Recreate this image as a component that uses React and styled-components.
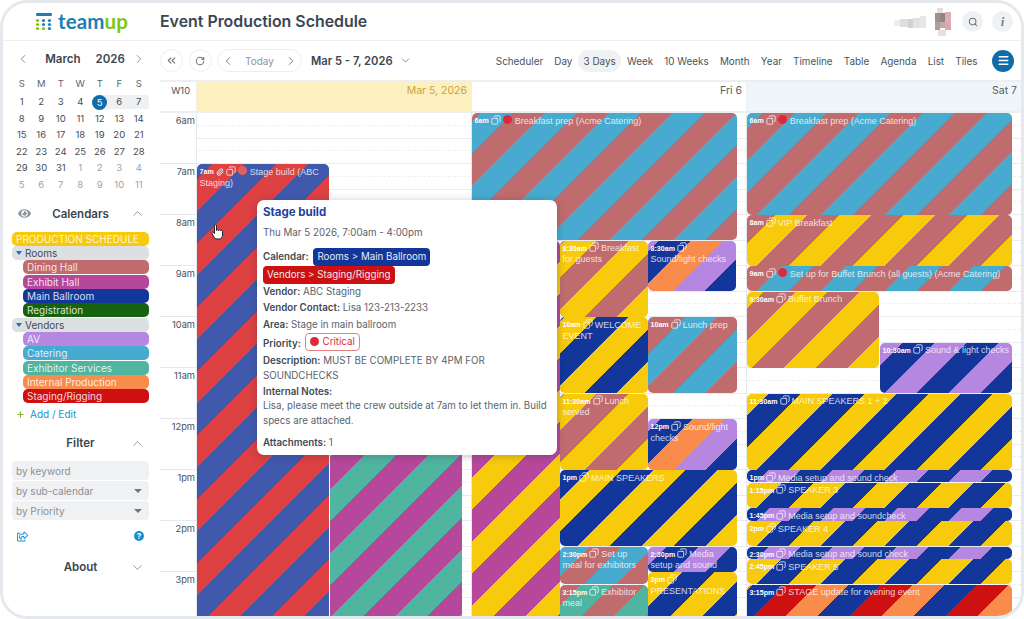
import React from 'react';
import styled, { createGlobalStyle } from 'styled-components';
import {
  ChevronLeft, ChevronRight, ChevronUp, ChevronDown, ChevronsLeft, RotateCw,
  Search, Menu, Plus, Copy, Paperclip,
} from 'lucide-react';
import { FaEye, FaRegShareSquare } from 'react-icons/fa';

const C = {
  dining: '#c06c6e', exhibit: '#b5489b', main: '#13369a', reg: '#17620f', av: '#b587e0',
  catering: '#47abd0', exhibitor: '#4fb5a0', internal: '#f98b4b', staging: '#cf1010', prod: '#f7ca0c',
};

const GlobalStyle = createGlobalStyle`
  html, body { margin: 0; padding: 0; background: #fff; }
  body { font-family: Inter, "Liberation Sans", sans-serif; color: #3c4853; }
  * { box-sizing: border-box; }
`;

const Frame = styled.div`
  width: 1024px;
  height: 619px;
  border: 3px solid #e5e8ec;
  border-radius: 27px;
  overflow: hidden;
  background: #fff;
  display: flex;
  flex-direction: column;
`;

// ---- top bar ----
const TopBar = styled.header`
  height: 38px;
  flex: none;
  display: flex;
  align-items: center;
  border-bottom: 1px solid #eceef0;
`;
const LogoBox = styled.div`
  width: 157px;
  flex: none;
  display: flex;
  align-items: center;
  padding-left: 32px;
  gap: 5px;
`;
const LogoText = styled.span`
  font-family: Lato, sans-serif;
  font-size: 20.5px;
  font-weight: 700;
  line-height: 1;
  color: #1b7fb4;
  letter-spacing: 0.1px;
  margin-top: -1px;
  b { font-weight: 700; color: #7cc70f; }
`;
const Title = styled.h1`
  flex: 1;
  margin: 0;
  font-size: 15.9px;
  font-weight: 600;
  color: #3a4651;
`;
const TopRight = styled.div`
  display: flex;
  align-items: center;
  padding-right: 8px;
`;
const RoundGrey = styled.div`
  width: 21px;
  height: 21px;
  border-radius: 50%;
  background: #f0f1f3;
  display: flex;
  align-items: center;
  justify-content: center;
  color: #6b747d;
  margin-left: ${p => p.$gap}px;
`;
const InfoMark = styled.span`
  font-family: "Liberation Serif", serif;
  font-size: 13px;
  font-weight: 700;
  font-style: italic;
  color: #7b838b;
`;

// ---- sidebar ----
const Body = styled.div`
  flex: 1;
  min-height: 0;
  display: flex;
`;
const Sidebar = styled.aside`
  width: 157px;
  flex: none;
  padding: 9px 11px 0 9px;
`;
const MonthHead = styled.div`
  height: 18px;
  display: flex;
  align-items: center;
  justify-content: space-between;
  padding: 0 3px 0 4px;
  color: #7d858d;
  font-size: 11.5px;
  font-weight: 600;
  span { color: #3a4651; }
`;
const MonthName = styled.div`
  display: flex;
  gap: 15px;
  padding-left: 8px;
`;
const DayGrid = styled.div`
  display: grid;
  grid-template-columns: repeat(7, 19.5px);
  margin: 8px 0 0 0;
`;
const WeekLetter = styled.div`
  height: 16px;
  margin-bottom: 2px;
  font-size: 9.5px;
  line-height: 16px;
  text-align: center;
  color: #5e666e;
`;
const DayCell = styled.div`
  height: 16.6px;
  font-size: 9.5px;
  line-height: 16px;
  text-align: center;
  color: ${p => (p.$off ? '#9aa1a8' : '#434c55')};
  background: ${p => (p.$range ? 'linear-gradient(#0000 0.5px, #eef0f2 0.5px, #eef0f2 15.5px, #0000 15.5px)' : 'none')};
  border-radius: ${p => (p.$end ? '0 5px 5px 0' : '0')};
`;
const TodayCell = styled(DayCell)`
  position: relative;
  background: linear-gradient(90deg, #0000 50%, #eef0f2 50%);
  background-size: 100% 15px;
  background-repeat: no-repeat;
  background-position: 0 0.5px;
  span {
    display: block;
    width: 15px;
    height: 15px;
    margin: 0 auto;
    border-radius: 50%;
    background: #0f6cab;
    color: #fff;
    line-height: 15px;
    position: relative;
    top: 0.5px;
  }
`;
const SectionHead = styled.div`
  height: 20px;
  margin-top: ${p => p.$mt}px;
  display: grid;
  grid-template-columns: 24px 1fr 24px;
  align-items: center;
  text-align: center;
  font-size: 11.5px;
  font-weight: 600;
  color: #3a4651;
  svg { color: #8b939a; justify-self: center; }
`;
const CalList = styled.div`
  margin-top: 8px;
  display: flex;
  flex-direction: column;
  gap: 0.33px;
`;
const CalRow = styled.div`
  height: 14px;
  margin-left: ${p => (p.$sub ? 11 : 0)}px;
  border-radius: 5px;
  padding: 0 4px;
  background: ${p => p.$bg};
  color: ${p => (p.$group ? '#3f4a54' : 'rgba(255, 255, 255, 0.85)')};
  font-size: 10px;
  line-height: 14px;
  white-space: nowrap;
  display: flex;
  align-items: center;
  gap: 3px;
`;
const GroupCaret = styled.i`
  width: 0;
  height: 0;
  border: 3.5px solid transparent;
  border-top: 4px solid #1a70b8;
  border-bottom: 0;
`;
const AddEdit = styled.div`
  height: 14px;
  margin-top: 4px;
  padding-left: 4px;
  display: flex;
  align-items: center;
  gap: 5px;
  font-size: 10px;
  color: #1a8fd0;
  svg { color: #86b62a; }
`;
const FilterBox = styled.div`
  margin-top: 8px;
  display: flex;
  flex-direction: column;
  gap: 1px;
`;
const FilterField = styled.div`
  height: 19px;
  border-radius: 4px;
  background: #f0f1f3;
  padding: 0 4px;
  display: flex;
  align-items: center;
  justify-content: space-between;
  color: #8a9097;
  font-size: 10px;
  i {
    width: 0;
    height: 0;
    margin-right: 3px;
    border: 4px solid transparent;
    border-top: 4px solid #6f767d;
    border-bottom: 0;
  }
`;
const LinkRow = styled.div`
  height: 12px;
  margin-top: 10px;
  padding: 0 5px;
  display: flex;
  justify-content: space-between;
  align-items: center;
  color: #1a8fd0;
`;
const HelpDot = styled.span`
  width: 10px;
  height: 10px;
  border-radius: 50%;
  background: #1a8fd0;
  color: #fff;
  font-size: 8px;
  font-weight: 700;
  line-height: 10px;
  text-align: center;
`;

// ---- main ----
const Main = styled.main`
  flex: 1;
  min-width: 0;
  display: flex;
  flex-direction: column;
`;
const Toolbar = styled.div`
  height: 39px;
  flex: none;
  display: flex;
  align-items: center;
  padding-right: 7px;
`;
const GhostRound = styled.button`
  width: 23px;
  height: 23px;
  padding: 0;
  margin-right: 5.5px;
  border: 1px solid #eceef1;
  border-radius: 50%;
  background: #fff;
  color: #6e767e;
  display: flex;
  align-items: center;
  justify-content: center;
`;
const TodayGroup = styled.div`
  width: 85px;
  height: 23px;
  display: flex;
  align-items: center;
  justify-content: space-between;
  padding: 0 3px;
  border: 1px solid #eceef1;
  border-radius: 12px;
  color: #6e767e;
  font-size: 10px;
  span { color: #8f969d; }
`;
const RangeLabel = styled.div`
  margin-left: 9px;
  display: flex;
  align-items: center;
  gap: 6px;
  font-size: 11.2px;
  font-weight: 600;
  color: #3a4651;
  white-space: nowrap;
  svg { color: #6e767e; }
`;
const Tabs = styled.nav`
  margin-left: auto;
  display: flex;
  align-items: center;
`;
const Tab = styled.div`
  height: 22px;
  padding: 0 5.6px;
  border-radius: 11px;
  font-size: 9.9px;
  line-height: 22px;
  color: #49535c;
  white-space: nowrap;
  background: ${p => (p.$active ? '#f0f1f3' : 'none')};
`;
const MenuBtn = styled.div`
  width: 22px;
  height: 22px;
  margin-left: 9px;
  border-radius: 50%;
  background: #0f6cab;
  color: #fff;
  display: flex;
  align-items: center;
  justify-content: center;
`;

const HeadRow = styled.div`
  height: 33px;
  flex: none;
  display: grid;
  grid-template-columns: 36px repeat(3, 1fr);
  border-top: 2px solid #eceef0;
  border-bottom: 2px solid #eceef0;
`;
const WeekNo = styled.div`
  font-size: 9.3px;
  line-height: 18px;
  padding-right: 6px;
  text-align: right;
  color: #49535c;
`;
const DayHead = styled.div`
  background: ${p => p.$bg};
  color: ${p => p.$fg};
  font-size: 10.5px;
  line-height: 17px;
  padding-right: 4px;
  text-align: right;
  border-left: 1px solid #eceef0;
`;
const Grid = styled.div`
  flex: 1;
  min-height: 0;
  display: grid;
  grid-template-columns: 36px repeat(3, 1fr);
  overflow: hidden;
  position: relative;
`;
const Hours = styled.div`
  display: flex;
  flex-direction: column;
`;
const HourLabel = styled.div`
  height: 51px;
  flex: none;
  padding-right: 1px;
  border-bottom: 1px solid #e6e8eb;
  font-size: 9.3px;
  line-height: 15px;
  text-align: right;
  color: #49535c;
`;
const DayCol = styled.div`
  position: relative;
  border-left: 1px solid #e6e8eb;
  display: flex;
  flex-direction: column;
`;
const Slot = styled.div`
  height: 12.75px;
  flex: none;
  border-bottom: 1px ${p => (p.$dashed ? 'dashed #eef0f2' : 'solid #e8eaed')};
`;
const Event = styled.div`
  position: absolute;
  border-radius: 5px;
  overflow: hidden;
  padding: 1.5px 2.2px 0 2.5px;
  font-family: "Liberation Sans", Arial, sans-serif;
  font-size: 9px;
  line-height: 10.5px;
  color: rgba(255, 255, 255, 0.8);
`;
const EvTime = styled.b`
  font-size: 7.1px;
  font-weight: 700;
  margin-right: 2px;
  color: #fff;
`;
const EvIcon = styled.span`
  display: inline-block;
  vertical-align: -1.5px;
  margin-right: 2px;
  color: #fff;
  line-height: 0;
  svg { transform: ${p => (p.$flip ? 'scaleX(-1)' : 'none')}; }
`;
const EvDot = styled.span`
  display: inline-block;
  width: 9px;
  height: 9px;
  border-radius: 50%;
  vertical-align: -1px;
  margin-right: 3px;
  background: ${p => p.$c};
`;

// ---- popup ----
const Popup = styled.div`
  position: absolute;
  left: 97px;
  top: 87px;
  width: 300px;
  height: 255px;
  padding: 4px 6px;
  background: #fff;
  border-radius: 7px;
  box-shadow: 0 1px 8px rgba(30, 40, 60, 0.28);
  font-size: 9.75px;
  line-height: 16.3px;
  color: #59626b;
  b { font-weight: 600; color: #3f4a54; }
`;
const PopTitle = styled.div`
  font-size: 11.5px;
  font-weight: 700;
  color: #1d3f9e;
  line-height: 16px;
`;
const PopDate = styled.div`
  margin: 5px 0 7px;
  line-height: 16px;
`;
const PopLine = styled.div`
  margin-top: ${p => p.$mt || 0}px;
  line-height: ${p => p.$lh || 16.3}px;
`;
const CalTag = styled.span`
  display: inline-block;
  height: 18px;
  padding: 0 4px;
  margin-left: ${p => p.$ml || 0}px;
  border-radius: 4px;
  background: ${p => p.$bg};
  color: #e8ecf5;
  line-height: 18px;
`;
const PrioTag = styled.span`
  display: inline-flex;
  align-items: center;
  gap: 4px;
  height: 18px;
  padding: 0 4px;
  margin-left: 1px;
  border: 1px solid #e57f85;
  border-radius: 4px;
  color: #dc2a3c;
  i { width: 9px; height: 9px; border-radius: 50%; background: #dc2a3c; }
`;
const Cursor = styled.svg`
  position: absolute;
  left: 51px;
  top: 111px;
`;

// ---- data ----
const weeks = [
  [1, 2, 3, 4, 5, 6, 7],
  [8, 9, 10, 11, 12, 13, 14],
  [15, 16, 17, 18, 19, 20, 21],
  [22, 23, 24, 25, 26, 27, 28],
  [29, 30, 31, 1, 2, 3, 4],
  [5, 6, 7, 8, 9, 10, 11],
];

const calendars = [
  { name: 'PRODUCTION SCHEDULE', bg: C.prod },
  { name: 'Rooms', group: true },
  { name: 'Dining Hall', bg: C.dining, sub: true },
  { name: 'Exhibit Hall', bg: C.exhibit, sub: true },
  { name: 'Main Ballroom', bg: C.main, sub: true },
  { name: 'Registration', bg: C.reg, sub: true },
  { name: 'Vendors', group: true },
  { name: 'AV', bg: C.av, sub: true },
  { name: 'Catering', bg: C.catering, sub: true },
  { name: 'Exhibitor Services', bg: C.exhibitor, sub: true },
  { name: 'Internal Production', bg: C.internal, sub: true },
  { name: 'Staging/Rigging', bg: C.staging, sub: true },
];

const tabs = ['Scheduler', 'Day', '3 Days', 'Week', '10 Weeks', 'Month', 'Year', 'Timeline', 'Table', 'Agenda', 'List', 'Tiles'];
const hours = ['6am', '7am', '8am', '9am', '10am', '11am', '12pm', '1pm', '2pm', '3pm'];

// these run on past the bottom of the picture
const END = 16.45;
const SOUND = [C.main, C.av, C.internal];
const thu = [
  { start: 8, end: END, x: 133, w: 132, colors: [C.exhibitor, C.exhibit] },
  { start: 7, end: 16, x: 0, w: 132, colors: ['#4159ad', '#dd4142'], time: '7am', clip: true, dot: '#e0605f', title: 'Stage build (ABC Staging)' },
];
const fri = [
  { start: 8.5, end: END, x: 0, w: 88, colors: [C.exhibit, C.prod] },
  { start: 6, end: 8.5, x: 0, w: 265, colors: [C.dining, C.catering], time: '6am', dot: '#dc2a3c', title: 'Breakfast prep (Acme Catering)' },
  { start: 8.5, end: 10, x: 88, w: 88, colors: [C.prod, C.dining], time: '8:30am', title: 'Breakfast for guests' },
  { start: 8.5, end: 9.5, x: 176, w: 88, colors: SOUND, time: '8:30am', title: 'Sound/light checks' },
  { start: 10, end: 11.5, x: 88, w: 88, colors: [C.prod, C.main], time: '10am', title: 'WELCOME EVENT' },
  { start: 10, end: 11.5, x: 176, w: 89, colors: [C.dining, C.catering], time: '10am', title: 'Lunch prep' },
  { start: 11.5, end: 13, x: 88, w: 88, colors: [C.prod, C.dining], time: '11:30am', title: 'Lunch served' },
  { start: 12, end: 13, x: 176, w: 89, colors: SOUND, time: '12pm', title: 'Sound/light checks' },
  { start: 13, end: 14.5, x: 88, w: 177, colors: [C.prod, C.main], time: '1pm', title: 'MAIN SPEAKERS' },
  { start: 14.5, end: 15.25, x: 88, w: 88, colors: [C.dining, C.catering], time: '2:30pm', title: 'Set up meal for exhibitors' },
  { start: 14.5, end: 15, x: 176, w: 89, colors: [C.main, C.av], time: '2:30pm', title: 'Media setup and sound' },
  { start: 15.25, end: END, x: 88, w: 88, colors: [C.dining, C.exhibitor], time: '3:15pm', title: 'Exhibitor meal' },
  { start: 15, end: END, x: 176, w: 89, colors: [C.prod, C.main], time: '3pm', title: 'PRESENTATIONS' },
];
const sat = [
  { start: 6, end: 8, x: 0, w: 265, colors: [C.dining, C.catering], time: '6am', dot: '#dc2a3c', title: 'Breakfast prep (Acme Catering)' },
  { start: 8, end: 9, x: 0, w: 265, colors: [C.prod, C.dining], time: '8am', title: 'VIP Breakfast' },
  { start: 9, end: 9.5, x: 0, w: 265, colors: [C.dining, C.catering], time: '9am', dot: '#dc2a3c', title: 'Set up for Buffet Brunch (all guests) (Acme Catering)' },
  { start: 9.5, end: 11, x: 0, w: 132, colors: [C.prod, C.dining], time: '9:30am', title: 'Buffet Brunch' },
  { start: 10.5, end: 11.5, x: 133, w: 132, colors: [C.main, C.av], time: '10:30am', title: 'Sound & light checks' },
  { start: 11.5, end: 13, x: 0, w: 265, colors: [C.prod, C.main], time: '11:30am', title: 'MAIN SPEAKERS 1 + 2' },
  { start: 13, end: 13.25, x: 0, w: 265, colors: [C.main, C.av], time: '1pm', title: 'Media setup and sound check' },
  { start: 13.25, end: 13.75, x: 0, w: 265, colors: [C.prod, C.main], time: '1:15pm', title: 'SPEAKER 3' },
  { start: 13.75, end: 14, x: 0, w: 265, colors: [C.main, C.av], time: '1:45pm', title: 'Media setup and soundcheck' },
  { start: 14, end: 14.5, x: 0, w: 265, colors: [C.prod, C.main], time: '2pm', title: 'SPEAKER 4' },
  { start: 14.5, end: 14.75, x: 0, w: 265, colors: [C.main, C.av], time: '2:30pm', title: 'Media setup and sound check' },
  { start: 14.75, end: 15.25, x: 0, w: 265, colors: [C.prod, C.main], time: '2:45pm', title: 'SPEAKER 5' },
  { start: 15.25, end: END, x: 0, w: 265, colors: [C.main, C.internal, C.staging], time: '3:15pm', title: 'STAGE update for evening event' },
];

const HOUR = 51;
const BAND = 22.6;

// stripes run from the bottom right corner of the event
function stripes(colors) {
  const stops = colors.map((c, i) => `${c} ${i * BAND}px ${(i + 1) * BAND}px`);
  return `repeating-linear-gradient(-45deg, ${stops.join(', ')})`;
}

function TeamupLogo() {
  return (
    <svg width="18" height="18" viewBox="0 0 18 18">
      <rect x="1" y="0" width="16" height="3" rx="1.2" fill="#1b7fb4" />
      {[7.5, 11.5, 15.5].map((y, r) =>
        [2.5, 8.5, 14.5].map((x, i) => (
          <circle
            key={`${r}-${i}`}
            cx={x}
            cy={y}
            r="1.6"
            fill={i === 0 || (r === 2 && i === 1) ? '#7cc70f' : '#1b7fb4'}
          />
        ))
      )}
    </svg>
  );
}

// blurred-out account name and picture from the screenshot
function Smudges() {
  const grey = [[0, 4, 6, 6, '#eceef0'], [6, 3, 8, 8, '#dcdfe1'], [14, 3, 5, 9, '#cfd2d4'], [19, 2, 7, 10, '#e0e2e3'], [26, 0, 6, 12, '#e6e7e8']];
  const face = [[2, 0, 6, 6, '#e9dcdc'], [0, 5, 5, 9, '#a08d8f'], [5, 5, 5, 9, '#8c8789'], [10, 4, 6, 11, '#dcaeb0'], [0, 14, 5, 8, '#a8a493'], [5, 14, 5, 6, '#c7a6a8'], [10, 15, 6, 7, '#d9aaac'], [3, 22, 8, 6, '#ecdcdc']];
  return (
    <svg width="66" height="32" viewBox="0 0 66 32">
      {grey.map(([x, y, w, h, f], i) => <rect key={i} x={x} y={y + 10} width={w} height={h} fill={f} />)}
      {face.map(([x, y, w, h, f], i) => <rect key={i} x={x + 41} y={y + 2} width={w} height={h} fill={f} />)}
    </svg>
  );
}

function EventCard({ ev }) {
  const style = {
    top: (ev.start - 6) * HOUR,
    height: (ev.end - ev.start) * HOUR - 0.5,
    left: ev.x,
    width: ev.w,
    background: stripes(ev.colors),
  };
  return (
    <Event style={style}>
      {ev.time && <EvTime>{ev.time}</EvTime>}
      {ev.clip && <EvIcon><Paperclip size={8} strokeWidth={2.5} /></EvIcon>}
      {ev.time && <EvIcon $flip><Copy size={10} strokeWidth={1.8} /></EvIcon>}
      {ev.dot && <EvDot $c={ev.dot} />}
      {ev.title}
    </Event>
  );
}

function Day({ events }) {
  const slots = [];
  for (let i = 0; i < 40; i++) slots.push(<Slot key={i} $dashed={i % 2 === 0} />);
  return (
    <DayCol>
      {slots}
      {events.map((ev, i) => <EventCard key={i} ev={ev} />)}
    </DayCol>
  );
}

function App() {
  return (
    <Frame>
      <GlobalStyle />
      <TopBar>
        <LogoBox>
          <TeamupLogo />
          <LogoText>team<b>up</b></LogoText>
        </LogoBox>
        <Title>Event Production Schedule</Title>
        <TopRight>
          <Smudges />
          <RoundGrey $gap={2}><Search size={10} strokeWidth={2.5} /></RoundGrey>
          <RoundGrey $gap={9}><InfoMark>i</InfoMark></RoundGrey>
        </TopRight>
      </TopBar>

      <Body>
        <Sidebar>
          <MonthHead>
            <ChevronLeft size={14} strokeWidth={1.5} />
            <MonthName><span>March</span><span>2026</span></MonthName>
            <ChevronRight size={14} strokeWidth={1.5} />
          </MonthHead>
          <DayGrid>
            {['S', 'M', 'T', 'W', 'T', 'F', 'S'].map((d, i) => <WeekLetter key={i}>{d}</WeekLetter>)}
            {weeks.map((w, r) =>
              w.map((d, i) => {
                if (r === 0 && i === 4) return <TodayCell key={d}><span>{d}</span></TodayCell>;
                return (
                  <DayCell key={`${r}-${i}`} $off={r >= 5 || (r === 4 && i > 2)} $range={r === 0 && i > 4} $end={r === 0 && i === 6}>
                    {d}
                  </DayCell>
                );
              })
            )}
          </DayGrid>

          <SectionHead $mt={10}><FaEye size={13} /><span>Calendars</span><ChevronUp size={15} strokeWidth={1.5} /></SectionHead>
          <CalList>
            {calendars.map(c => (
              <CalRow key={c.name} $bg={c.group ? '#dde0e3' : c.bg} $sub={c.sub} $group={c.group}>
                {c.group && <GroupCaret />}
                {c.name}
              </CalRow>
            ))}
          </CalList>
          <AddEdit><Plus size={9} strokeWidth={3} />Add / Edit</AddEdit>

          <SectionHead $mt={12}><i /><span>Filter</span><ChevronUp size={15} strokeWidth={1.5} /></SectionHead>
          <FilterBox>
            <FilterField>by keyword</FilterField>
            <FilterField>by sub-calendar<i /></FilterField>
            <FilterField>by Priority<i /></FilterField>
          </FilterBox>
          <LinkRow><FaRegShareSquare size={11} /><HelpDot>?</HelpDot></LinkRow>
          <SectionHead $mt={15}><i /><span>About</span><ChevronDown size={15} strokeWidth={1.5} /></SectionHead>
        </Sidebar>

        <Main>
          <Toolbar>
            <GhostRound><ChevronsLeft size={13} /></GhostRound>
            <GhostRound><RotateCw size={10} strokeWidth={2.5} /></GhostRound>
            <TodayGroup>
              <ChevronLeft size={14} strokeWidth={1.5} />
              <span>Today</span>
              <ChevronRight size={14} strokeWidth={1.5} />
            </TodayGroup>
            <RangeLabel>Mar 5 - 7, 2026<ChevronDown size={13} strokeWidth={1.5} /></RangeLabel>
            <Tabs>
              {tabs.map(t => <Tab key={t} $active={t === '3 Days'}>{t}</Tab>)}
              <MenuBtn><Menu size={13} strokeWidth={2.5} /></MenuBtn>
            </Tabs>
          </Toolbar>
          <HeadRow>
            <WeekNo>W10</WeekNo>
            <DayHead $bg="#fdf0bf" $fg="#c9a33a">Mar 5, 2026</DayHead>
            <DayHead $bg="#fff" $fg="#555e67">Fri 6</DayHead>
            <DayHead $bg="#eef6fa" $fg="#555e67">Sat 7</DayHead>
          </HeadRow>
          <Grid>
            <Hours>
              {hours.map(h => <HourLabel key={h}>{h}</HourLabel>)}
            </Hours>
            <Day events={thu} />
            <Day events={fri} />
            <Day events={sat} />
            <Popup>
              <PopTitle>Stage build</PopTitle>
              <PopDate>Thu Mar 5 2026, 7:00am - 4:00pm</PopDate>
              <PopLine><b>Calendar:</b> <CalTag $bg={C.main} $ml={2}>Rooms &gt; Main Ballroom</CalTag></PopLine>
              <PopLine><CalTag $bg={C.staging}>Vendors &gt; Staging/Rigging</CalTag></PopLine>
              <PopLine><b>Vendor:</b> ABC Staging</PopLine>
              <PopLine><b>Vendor Contact:</b> Lisa 123-213-2233</PopLine>
              <PopLine><b>Area:</b> Stage in main ballroom</PopLine>
              <PopLine><b>Priority:</b> <PrioTag><i />Critical</PrioTag></PopLine>
              <PopLine $mt={1} $lh={15.5}><b>Description:</b> MUST BE COMPLETE BY 4PM FOR SOUNDCHECKS</PopLine>
              <PopLine $lh={15.5}><b>Internal Notes:</b></PopLine>
              <PopLine $lh={14.5}>Lisa, please meet the crew outside at 7am to let them in. Build specs are attached.</PopLine>
              <PopLine $mt={7}><b>Attachments:</b> 1</PopLine>
            </Popup>
            <Cursor width="13" height="16" viewBox="0 0 13 16">
              <path d="M3.5 1.5c0-1 2-1 2 0v5c0-1 2-1 2 0 0-1 2-1 2 .2 .6-.8 2-.4 2 .6v3.700c0 2-1.500 4-3.500 4H6c-1.500 0-2.200-.8-3-2L1 9.500c-.6-1 .8-2 1.500-1l1 1.200z" fill="#fff" stroke="#222" strokeWidth="1" />
            </Cursor>
          </Grid>
        </Main>
      </Body>
    </Frame>
  );
}

export default App;
